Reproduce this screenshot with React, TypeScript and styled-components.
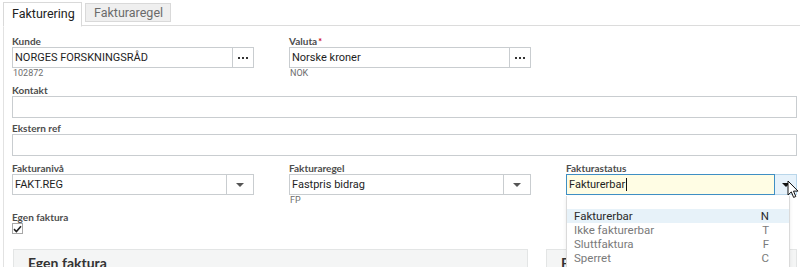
import React from 'react';
import styled, { createGlobalStyle, css } from 'styled-components';

const GlobalStyle = createGlobalStyle`
  html, body {
    margin: 0;
    padding: 0;
    background: #fff;
    overflow: hidden;
  }
  body {
    font-family: Lato, "Liberation Sans", sans-serif;
    color: #333;
  }
`;

export default function App() {
  return (
    <>
      <GlobalStyle />
      <Page>
        <TabBar>
          <Tab active>Fakturering</Tab>
          <Tab>Fakturaregel</Tab>
        </TabBar>
        <Content>
          <Row>
            <Field>
              <Label>Kunde</Label>
              <LookupInput value="NORGES FORSKNINGSRÅD" />
              <Hint>102872</Hint>
            </Field>
            <Field>
              <Label>
                Valuta<Required>*</Required>
              </Label>
              <LookupInput value="Norske kroner" />
              <Hint>NOK</Hint>
            </Field>
          </Row>

          <Wide gap={7}>
            <Label>Kontakt</Label>
            <TextBox />
          </Wide>
          <Wide gap={5}>
            <Label>Ekstern ref</Label>
            <TextBox />
          </Wide>

          <Row gap={7}>
            <Field>
              <Label>Fakturanivå</Label>
              <SelectInput value="FAKT.REG" />
            </Field>
            <Field>
              <Label>Fakturaregel</Label>
              <SelectInput value="Fastpris bidrag" />
              <Hint>FP</Hint>
            </Field>
            <Field>
              <Label>Fakturastatus</Label>
              <SelectInput value="Fakturerbar" focused />
              <StatusList />
              <Pointer />
            </Field>
          </Row>

          <Wide gap={7}>
            <Label>Egen faktura</Label>
            <CheckBox>
              <svg width="9" height="8" viewBox="0 0 9 8">
                <path d="M1 4.2 L3.4 6.5 L8 1.2" fill="none" stroke="#222" strokeWidth="1.6" />
              </svg>
            </CheckBox>
          </Wide>

          <Panels>
            <Panel>
              <PanelTitle>Egen faktura</PanelTitle>
            </Panel>
            <Panel>
              <PanelTitle>Fakturaadresse</PanelTitle>
            </Panel>
          </Panels>
        </Content>
      </Page>
    </>
  );
}

const LookupInput: React.FC<{ value: string }> = ({ value }) => (
  <InputGroup>
    <InputText>{value}</InputText>
    <SideButton>
      <Dots>
        <i />
        <i />
        <i />
      </Dots>
    </SideButton>
  </InputGroup>
);

const SelectInput: React.FC<{ value: string; focused?: boolean }> = ({ value, focused }) => (
  <InputGroup>
    <InputText focused={focused}>
      {value}
      {focused && <Caret />}
    </InputText>
    <SideButton wide focused={focused}>
      <Arrow dark={focused} />
    </SideButton>
  </InputGroup>
);

const options = [
  { label: 'Fakturerbar', code: 'N', selected: true },
  { label: 'Ikke fakturerbar', code: 'T' },
  { label: 'Sluttfaktura', code: 'F' },
  { label: 'Sperret', code: 'C' }
];

const StatusList = () => (
  <ListBox>
    <BlankOption />
    {options.map(option => (
      <Option key={option.code} selected={option.selected}>
        <span>{option.label}</span>
        <span>{option.code}</span>
      </Option>
    ))}
  </ListBox>
);

const Pointer = () => (
  <PointerWrap>
    <svg width="13" height="20" viewBox="0 0 13 20">
      <path
        d="M1 1 L1 15 L4.3 11.9 L6.6 17.4 L8.8 16.5 L6.5 11.1 L11 11.1 Z"
        fill="#fff"
        stroke="#111"
        strokeWidth="1"
        strokeLinejoin="round"
      />
    </svg>
  </PointerWrap>
);

const Page = styled.div`
  width: 800px;
  height: 267px;
  padding: 2px 0 0 3px;
  box-sizing: border-box;
  overflow: hidden;
`;

const TabBar = styled.div`
  display: flex;
  align-items: flex-start;
  gap: 3px;
  height: 23px;
  border-bottom: 1px solid #dcdcdc;
`;

const Tab = styled.div<{ active?: boolean }>`
  font-family: Roboto, "Liberation Sans", sans-serif;
  font-size: 12.5px;
  line-height: 17px;
  width: 68px;
  padding: 0 8px;
  margin-top: 1px;
  border: 1px solid #d9d9d9;
  background: #efefef;
  color: #6b6b6b;
  ${props =>
    props.active &&
    css`
      margin-top: 0;
      height: 23px;
      line-height: 22px;
      width: 61px;
      border-bottom-color: #fff;
      background: #fff;
      color: #222;
    `}
`;

const Content = styled.div`
  border-left: 1px solid #e2e2e2;
  padding: 10px 3px 0 8px;
  height: 260px;
`;

const Row = styled.div<{ gap?: number }>`
  display: grid;
  grid-template-columns: 242px 242px 1fr;
  column-gap: 35px;
  margin-top: ${props => props.gap ?? 0}px;
`;

const Field = styled.div`
  position: relative;
  display: flex;
  flex-direction: column;
`;

const Wide = styled(Field)<{ gap: number }>`
  margin-top: ${props => props.gap}px;
`;

const Label = styled.label`
  font-size: 10px;
  line-height: 11px;
  font-weight: 700;
  color: #4d4d4d;
`;

const Required = styled.span`
  color: #d0021b;
  font-size: 9px;
  vertical-align: top;
  margin-left: 1px;
`;

const Hint = styled.div`
  font-family: Roboto, "Liberation Sans", sans-serif;
  font-size: 9px;
  line-height: 10px;
  color: #6e6e6e;
  padding-left: 1px;
`;

const InputGroup = styled.div`
  display: flex;
  height: 21px;
`;

const InputText = styled.div<{ focused?: boolean }>`
  flex: 1;
  display: flex;
  align-items: center;
  padding: 0 2px;
  font-family: Roboto, "Liberation Sans", sans-serif;
  font-size: 11px;
  color: #1e1e1e;
  border: 1px solid #c9cdd0;
  background: #fff;
  box-sizing: border-box;
  ${props =>
    props.focused &&
    css`
      border-color: #3f8fc4;
      background: #fffde4;
    `}
`;

const Caret = styled.span`
  display: inline-block;
  width: 1px;
  height: 13px;
  background: #111;
  margin-left: 1px;
`;

const TextBox = styled.div`
  height: 22px;
  border: 1px solid #c9cdd0;
  box-sizing: border-box;
  background: #fff;
`;

const SideButton = styled.div<{ wide?: boolean; focused?: boolean }>`
  width: ${props => (props.wide ? 27 : 21)}px;
  display: flex;
  align-items: center;
  justify-content: center;
  border: 1px solid #c9cdd0;
  border-left: none;
  background: #fff;
  box-sizing: border-box;
  ${props =>
    props.focused &&
    css`
      width: 22px;
      background: #e6f2fb;
      border-color: #b9d6ea;
    `}
`;

const Dots = styled.span`
  display: flex;
  gap: 2px;
  i {
    width: 2px;
    height: 2px;
    background: #333;
  }
`;

const Arrow = styled.span<{ dark?: boolean }>`
  width: 0;
  height: 0;
  border-left: 4px solid transparent;
  border-right: 4px solid transparent;
  border-top: 4px solid ${props => (props.dark ? '#111' : '#555')};
`;

const ListBox = styled.div`
  position: absolute;
  top: 33px;
  left: 0;
  width: 222px;
  background: #fff;
  border: 1px solid #dadada;
  border-top: none;
  box-shadow: 0 2px 4px rgba(0, 0, 0, 0.08);
  z-index: 5;
  height: 80px;
`;

const BlankOption = styled.div`
  height: 13px;
`;

const Option = styled.div<{ selected?: boolean }>`
  display: flex;
  justify-content: space-between;
  padding: 0 20px 0 7px;
  height: 14px;
  line-height: 14px;
  font-family: Roboto, "Liberation Sans", sans-serif;
  font-size: 11.5px;
  color: #7a7a7a;
  ${props =>
    props.selected &&
    css`
      background: #e7f2f9;
      color: #2a2a2a;
    `}
`;

const PointerWrap = styled.div`
  position: absolute;
  top: 17px;
  left: 221px;
  z-index: 6;
  line-height: 0;
`;

const CheckBox = styled.div`
  width: 11px;
  height: 11px;
  border: 1px solid #a8a8a8;
  box-sizing: border-box;
  display: flex;
  align-items: center;
  justify-content: center;
  background: #fff;
`;

const Panels = styled.div`
  display: grid;
  grid-template-columns: 515px 1fr;
  column-gap: 18px;
  margin: 15px 0 0 1px;
`;

const Panel = styled.div`
  height: 40px;
  background: #f4f5f5;
  border: 1px solid #e3e5e5;
  padding: 4px 14px;
`;

const PanelTitle = styled.div`
  font-size: 14px;
  line-height: 18px;
  font-weight: 700;
  color: #333;
`;
